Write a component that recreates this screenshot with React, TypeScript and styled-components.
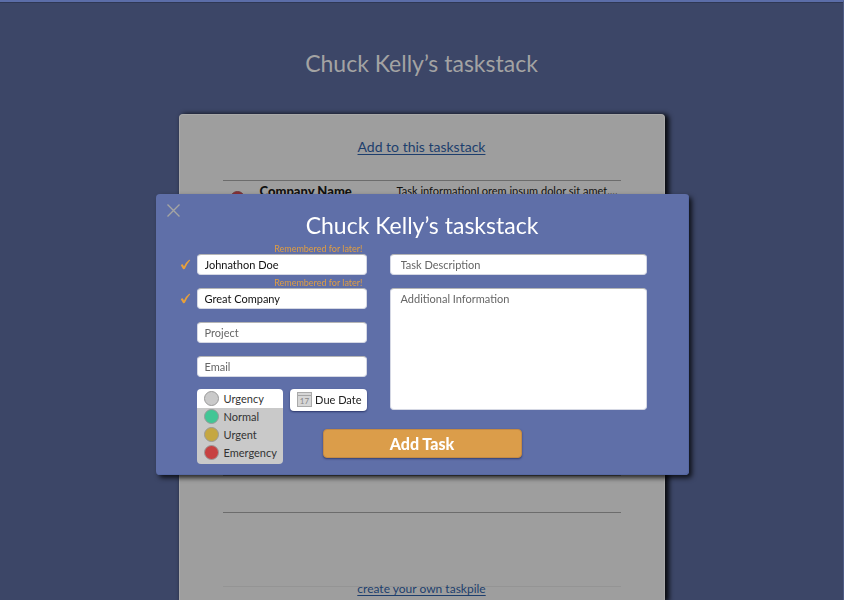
import React, { useState } from "react";
import styled, { createGlobalStyle } from "styled-components";

const GlobalStyle = createGlobalStyle`
  *, *::before, *::after { box-sizing: border-box; }
  body {
    margin: 0;
    overflow: hidden;
    background: #3c4667;
    font-family: Lato, "Open Sans", sans-serif;
    font-size: 11px;
    color: #111;
  }
  button, input, textarea { font: inherit; }
`;

const Page = styled.main`
  height: 100vh;
  overflow: hidden;
  display: flex;
  flex-direction: column;
  align-items: center;
  border-top: 2px solid #5b6da8;
  box-shadow: inset 0 1px 0 #2f3855;
  border-right: 1px solid #4f5c85;
`;

const PageTitle = styled.h1`
  margin: 47px 0 37px;
  font-size: 23px;
  line-height: 28px;
  font-weight: 400;
  color: #a3a3a3;
`;

const Card = styled.section`
  flex: 1 0 auto;
  width: calc(100% - 32px);
  max-width: 486px;
  padding: 23px 43px 0;
  border-radius: 4px 4px 0 0;
  background: #9e9e9e;
  border: 1px solid #a9a9a9;
  border-bottom: 0;
  box-shadow: 3px 1px 5px 1px rgba(0, 0, 0, 0.85);
`;

const TextLink = styled.a<{ $small?: boolean }>`
  font-size: ${(p) => (p.$small ? 12 : 14)}px;
  line-height: 18px;
  color: #1d3e6d;
  text-decoration: underline;
  text-underline-offset: 2px;
`;

const Centered = styled.div`
  display: flex;
  justify-content: center;
`;

const TaskList = styled.ul`
  list-style: none;
  margin: 24px 0 0;
  padding: 0;
`;

const TaskRow = styled.li<{ $height: number }>`
  height: ${(p) => p.$height}px;
  border-top: 1px solid #6c6c6c;
  display: grid;
  grid-template-columns: 37px 137px 1fr;
  align-items: start;
  padding-top: 2px;
  font-size: 11px;
  line-height: 16px;
  white-space: nowrap;
`;

const Company = styled.strong`
  font-size: 13px;
  font-weight: 900;
`;

const Dot = styled.span<{ $color: string }>`
  flex: none;
  width: 15px;
  height: 15px;
  border-radius: 50%;
  border: 1px solid #9a9a9a;
  background: ${(p) => p.$color};
`;

const RowDot = styled(Dot)`
  margin: 8px 0 0 7px;
  border-color: #6e3a3e;
`;

const Footer = styled.footer`
  display: grid;
  align-items: center;
  justify-items: center;
  & > * { grid-area: 1 / 1; }
`;

const FaintRule = styled.hr`
  width: 100%;
  margin: 0 0 6px;
  border: 0;
  border-top: 1px solid #949494;
`;

const Overlay = styled.div`
  position: fixed;
  inset: 0;
  display: flex;
  justify-content: center;
  align-items: flex-start;
  padding: 194px 16px 0;
`;

const Dialog = styled.form`
  position: relative;
  width: 100%;
  max-width: 533px;
  padding: 17px 42px 17px 24px;
  border-radius: 4px;
  background: #5f6fa8;
  box-shadow: 3px 3px 5px rgba(0, 0, 0, 0.75), inset -1px -1px 0 #5668a3;
`;

const CloseButton = styled.button`
  position: absolute;
  top: 10px;
  left: 11px;
  padding: 0;
  border: 0;
  background: none;
  display: flex;
  color: #a5a5a3;
`;

const DialogTitle = styled.h2`
  margin: 0 0 2px 18px;
  text-align: center;
  font-size: 23px;
  line-height: 28px;
  font-weight: 400;
  color: #fff;
`;

const Columns = styled.div`
  display: grid;
  grid-template-columns: 187px 1fr;
  column-gap: 23px;
`;

const Field = styled.div`
  display: grid;
  grid-template-columns: 17px 1fr;
  grid-template-rows: 13px 21px;
  align-items: center;
`;

const Note = styled.label`
  grid-column: 2;
  justify-self: end;
  margin: 2px 4px 0 0;
  min-height: 10px;
  font-size: 9px;
  line-height: 10px;
  color: #e09d42;
`;

const Check = styled.svg`
  grid-row: 2;
  grid-column: 1;
`;

const TextInput = styled.input`
  grid-row: 2;
  grid-column: 2;
  width: 100%;
  height: 21px;
  padding: 0 7px 1px;
  border: 1px solid #c4c6cf;
  border-color: #b5b5b5 #d5d8e4 #d5d8e4;
  border-radius: 4px;
  background: #fff;
  color: #111;
  &::placeholder { color: #666; opacity: 1; }
`;

const Details = styled.div`
  display: flex;
  flex-direction: column;
  gap: 13px;
  padding-top: 13px;
`;

const DescriptionInput = styled(TextInput)`
  padding: 0 10px 1px;
`;

const DetailsArea = styled.textarea`
  display: block;
  width: 100%;
  height: 122px;
  padding: 3px 10px;
  line-height: 14px;
  resize: none;
  border: 1px solid #c4c6cf;
  border-color: #b5b5b5 #d5d8e4 #d5d8e4;
  border-radius: 4px;
  background: #fff;
  &::placeholder { color: #666; opacity: 1; }
`;

const Pickers = styled.div`
  display: grid;
  grid-template-columns: 86px 77px;
  align-items: start;
  gap: 7px;
  margin: 12px 0 0 17px;
  height: 22px;
`;

const UrgencyPicker = styled.div`
  position: relative;
  z-index: 1;
`;

const OptionButton = styled.button`
  width: 100%;
  height: 18px;
  padding: 0 0 1px 7px;
  border: 0;
  background: none;
  display: flex;
  align-items: center;
  gap: 5px;
  color: #333;
  text-align: left;
`;

const UrgencyToggle = styled(OptionButton)`
  height: 19px;
  padding-bottom: 0;
  border-radius: 4px 4px 0 0;
  background: #fff;
`;

const UrgencyMenu = styled.ul`
  position: absolute;
  top: 100%;
  left: 0;
  right: 0;
  list-style: none;
  margin: 0;
  padding: 0 0 2px;
  border-radius: 0 0 4px 4px;
  background: #c9c9c9;
`;

const DateButton = styled.button`
  height: 22px;
  padding: 0 5px 1px 7px;
  border: 0;
  border-radius: 4px;
  background: #fff;
  box-shadow: 0 1px 2px rgba(20, 30, 80, 0.7);
  display: flex;
  align-items: center;
  justify-content: space-between;
  color: #222;
  white-space: nowrap;
`;

const SubmitRow = styled.div`
  display: flex;
  justify-content: center;
  margin: 18px 0 0 18px;
`;

const SubmitButton = styled.button`
  width: 199px;
  height: 29px;
  padding: 0 0 1px;
  border: 1px solid #c48a45;
  border-radius: 4px;
  background: #db9d4a;
  box-shadow: 0 1px 2px rgba(20, 30, 80, 0.6);
  color: #fff;
  font-size: 16px;
  font-weight: 900;
`;

const levels = [
  { name: "Normal", color: "#42c695" },
  { name: "Urgent", color: "#c5a742" },
  { name: "Emergency", color: "#c74141" },
];

function CheckMark() {
  return (
    <Check width="11" height="12" viewBox="0 0 11 12" aria-hidden="true">
      <path d="M0.8 6.2Q2 4.8 2.9 5.6L4 7.4Q6.200 3 9.200 0.800L10.300 0.900Q7 4.500 4.900 9.800Q4 10.600 3 9.900Z" fill="#e8a03a" />
    </Check>
  );
}

function CalendarIcon() {
  return (
    <svg width="15" height="15" viewBox="0 0 15 15" aria-hidden="true">
      <rect x="0.5" y="0.5" width="14" height="14" fill="#d6d6d6" stroke="#aaa" />
      <path d="M1 3.5H14" stroke="#a5a5a5" />
      <text x="7.500" y="12" textAnchor="middle" fontSize="8" fill="#888">17</text>
    </svg>
  );
}

type PersonFieldProps = {
  id: string;
  label: string;
  value?: string;
};

function PersonField({ id, label, value }: PersonFieldProps) {
  return (
    <Field>
      <Note htmlFor={id}>{value ? "Remembered for later!" : ""}</Note>
      {value && <CheckMark />}
      <TextInput id={id} aria-label={label} placeholder={label} defaultValue={value} />
    </Field>
  );
}

export default function App() {
  const [urgency, setUrgency] = useState<string | null>(null);
  const [open, setOpen] = useState(true);
  const current = levels.find((l) => l.name === urgency);

  return (
    <>
      <GlobalStyle />
      <Page>
        <PageTitle>Chuck Kelly’s taskstack</PageTitle>
        <Card>
          <Centered>
            <TextLink href="#add">Add to this taskstack</TextLink>
          </Centered>
          <TaskList>
            <TaskRow $height={295}>
              <RowDot $color="#8a3035" />
              <Company>Company Name</Company>
              <span>Task informationLorem ipsum dolor sit amet....</span>
            </TaskRow>
            <TaskRow $height={37} />
            <TaskRow $height={68} />
          </TaskList>
          <Footer>
            <FaintRule />
            <TextLink $small href="#create">create your own taskpile</TextLink>
          </Footer>
        </Card>
      </Page>
      <Overlay>
        <Dialog role="dialog" aria-labelledby="dialog-title" onSubmit={(e) => e.preventDefault()}>
          <CloseButton type="button" aria-label="Close">
            <svg width="13" height="13" viewBox="0 0 13 13" aria-hidden="true">
              <path d="M0.5 0.5 12.5 12.5M12.5 0.5 0.5 12.5" stroke="currentColor" strokeWidth="1.4" />
            </svg>
          </CloseButton>
          <DialogTitle id="dialog-title">Chuck Kelly’s taskstack</DialogTitle>
          <Columns>
            <div>
              <PersonField id="name" label="Name" value="Johnathon Doe" />
              <PersonField id="company" label="Company" value="Great Company" />
              <PersonField id="project" label="Project" />
              <PersonField id="email" label="Email" />
              <Pickers>
                <UrgencyPicker>
                  <UrgencyToggle
                    type="button"
                    aria-haspopup="listbox"
                    aria-expanded={open}
                    onClick={() => setOpen(!open)}
                  >
                    <Dot $color={current ? current.color : "#cacaca"} />
                    {current ? current.name : "Urgency"}
                  </UrgencyToggle>
                  {open && (
                    <UrgencyMenu>
                      {levels.map((level) => (
                        <li key={level.name}>
                          <OptionButton
                            type="button"
                            onClick={() => {
                              setUrgency(level.name);
                              setOpen(false);
                            }}
                          >
                            <Dot $color={level.color} />
                            {level.name}
                          </OptionButton>
                        </li>
                      ))}
                    </UrgencyMenu>
                  )}
                </UrgencyPicker>
                <DateButton type="button">
                  <CalendarIcon />
                  Due Date
                </DateButton>
              </Pickers>
            </div>
            <Details>
              <DescriptionInput aria-label="Task Description" placeholder="Task Description" />
              <DetailsArea aria-label="Additional Information" placeholder="Additional Information" />
            </Details>
          </Columns>
          <SubmitRow>
            <SubmitButton type="submit">Add Task</SubmitButton>
          </SubmitRow>
        </Dialog>
      </Overlay>
    </>
  );
}
